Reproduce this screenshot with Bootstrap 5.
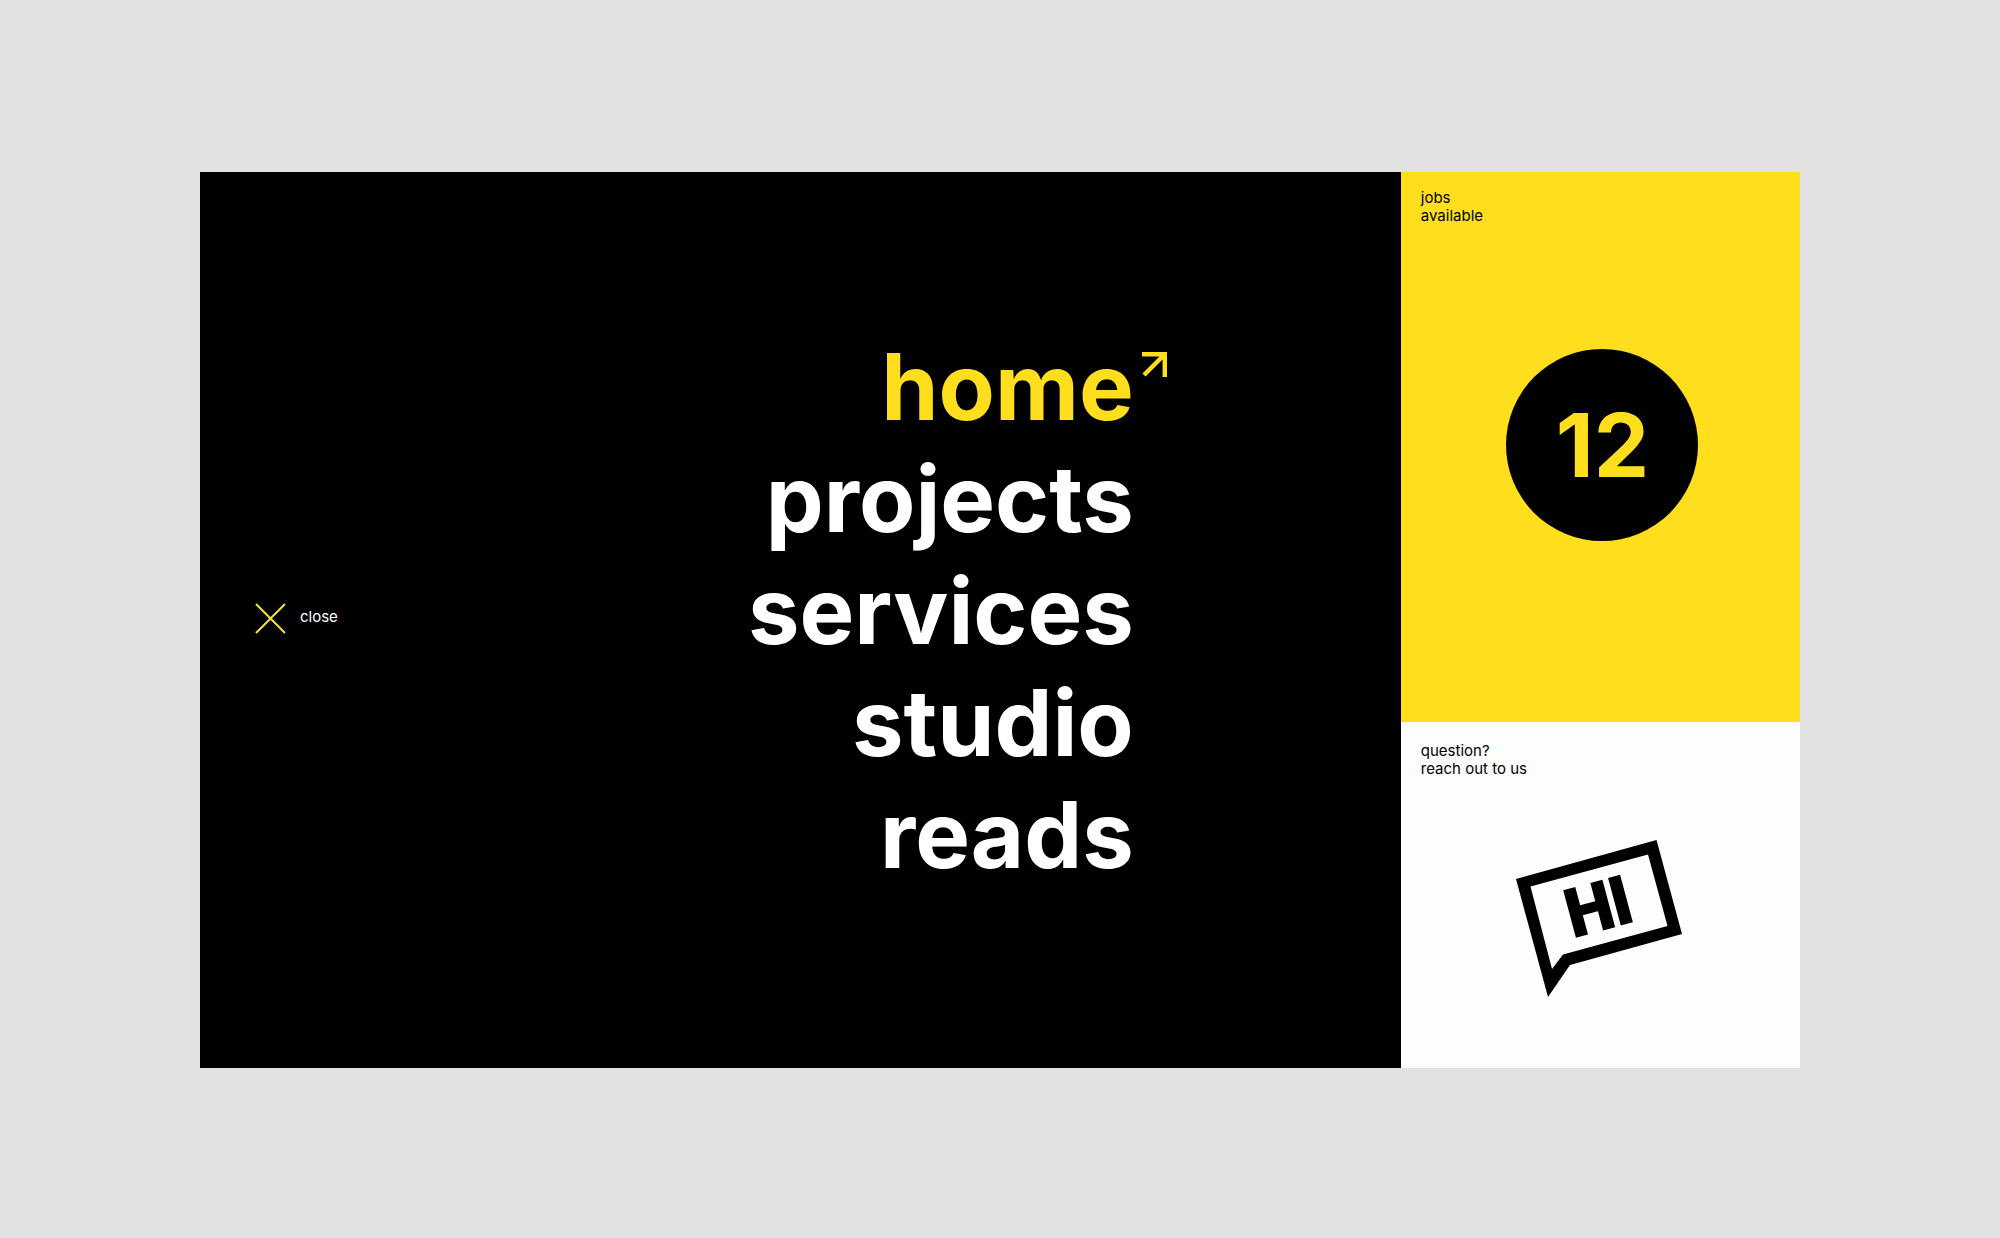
<!DOCTYPE html>
<html lang="en">
<head>
<meta charset="utf-8">
<meta name="viewport" content="width=device-width, initial-scale=1">
<title>Studio menu</title>
<link href="https://cdn.jsdelivr.net/npm/bootstrap@5.3.0/dist/css/bootstrap.min.css" rel="stylesheet">
<style>
  :root { --sun: #ffdf1d; }
  body { background: #e2e2e2; font-family: Inter, "Open Sans", sans-serif; color: #000; padding-top: 2px; }
  .stage { width: 80%; aspect-ratio: 1600 / 896; }
  .menu-pane { width: 75.05%; background: #000; padding: 0 267px 0 55px; }
  .side-pane { width: 24.95%; }
  .close-btn { gap: 14px; font-size: 15px; line-height: 18px; padding-bottom: 4px; }
  .close-btn span { padding-bottom: 2px; }
  .main-nav { font-size: 92px; line-height: 112px; font-weight: 700; padding-bottom: 18px; }
  .main-nav a { color: #fff; }
  .main-nav a:hover, .main-nav a.current { color: var(--sun); }
  .corner-arrow { position: absolute; left: 100%; top: 21px; margin-left: 8px; }
  .tile { padding: 17px 16px 12px 20px; font-size: 15px; line-height: 18px; color: #000; }
  .tile-jobs { height: 61.4%; background: var(--sun); padding-bottom: 57px; }
  .tile-ask { height: 38.6%; background: #fdfdfd; padding-top: 20px; padding-right: 22px; padding-bottom: 10px; }
  .count { width: 192px; height: 192px; background: #000; color: var(--sun); font-size: 88px; font-weight: 700; line-height: 1; }
  .hi-text { font: 700 65px Roboto, sans-serif; stroke: #000; stroke-width: 3px; }
</style>
</head>
<body class="min-vh-100 d-flex align-items-center justify-content-center">
<main class="stage d-flex">
  <section class="menu-pane d-flex align-items-center justify-content-between">
    <button type="button" class="close-btn btn px-0 pt-0 border-0 text-white d-flex align-items-center">
      <svg width="31" height="31" viewBox="0 0 31 31" fill="none" stroke="#f5e52a" stroke-width="2" aria-hidden="true"><path d="M1 1 30 30M30 1 1 30"/></svg>
      <span>close</span>
    </button>
    <nav class="main-nav d-flex flex-column align-items-end" aria-label="Main">
      <a href="#" class="current position-relative text-decoration-none" aria-current="page">home<svg class="corner-arrow" width="25" height="25" viewBox="0 0 25 25" fill="none" stroke="currentColor" stroke-width="4.4" aria-hidden="true"><path d="M0 2.2H22.8V25M22 3 2 23"/></svg></a>
      <a href="#" class="text-decoration-none">projects</a>
      <a href="#" class="text-decoration-none">services</a>
      <a href="#" class="text-decoration-none">studio</a>
      <a href="#" class="text-decoration-none">reads</a>
    </nav>
  </section>
  <aside class="side-pane d-flex flex-column">
    <a href="#" class="tile tile-jobs d-flex flex-column text-decoration-none">
      <span>jobs<br>available</span>
      <span class="flex-grow-1 d-flex align-items-center justify-content-center"><span class="count rounded-circle d-flex align-items-center justify-content-center">12</span></span>
    </a>
    <a href="#" class="tile tile-ask d-flex flex-column text-decoration-none">
      <span>question?<br>reach out to us</span>
      <span class="flex-grow-1 d-flex align-items-center justify-content-center">
        <svg width="168" height="158" viewBox="25 18 168 158" role="img" aria-label="Say hi">
          <path fill-rule="evenodd" d="M26 58 166.500 19 192 113 80 144 58 176ZM40.500 65.500 62 148 73 133.500 177.500 105 158 33.500Z"/>
          <text class="hi-text" transform="translate(83 116) rotate(-15)">HI</text>
        </svg>
      </span>
    </a>
  </aside>
</main>
<script src="https://cdn.jsdelivr.net/npm/bootstrap@5.3.0/dist/js/bootstrap.bundle.min.js"></script>
</body>
</html>
